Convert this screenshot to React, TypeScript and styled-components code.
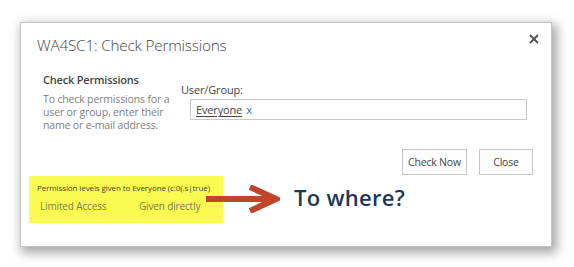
import React from "react";
import styled, { createGlobalStyle } from "styled-components";

const Global = createGlobalStyle`
  html, body { margin: 0; padding: 0; background: #fff; }
  body { font-family: "Open Sans", "Noto Sans", sans-serif; }
`;

const Page = styled.div`
  width: 574px;
  height: 267px;
  padding: 22px 0 0 20px;
  box-sizing: border-box;
  overflow: hidden;
`;

const Dialog = styled.div`
  position: relative;
  width: 532px;
  height: 225px;
  box-sizing: border-box;
  background: #fff;
  border: 1px solid #c6c6c6;
  box-shadow: 3px 4px 10px 2px rgba(0, 0, 0, 0.35);
  display: flex;
  flex-direction: column;
`;

const Title = styled.h1`
  margin: 0;
  padding: 11px 0 0 16px;
  font-family: "Open Sans", sans-serif;
  font-weight: 300;
  font-size: 15.3px;
  line-height: 22px;
  color: #444;
  letter-spacing: -0.2px;
`;

const CloseX = styled.svg`
  position: absolute;
  top: 11px;
  right: 12px;
`;

const Body = styled.div`
  display: flex;
  padding: 17px 0 0 22px;
`;

const Left = styled.div`
  width: 138px;
  display: flex;
  flex-direction: column;
`;

const SectionTitle = styled.div`
  font-size: 11px;
  line-height: 14px;
  font-weight: 600;
  color: #444;
  letter-spacing: -0.2px;
`;

const Desc = styled.div`
  margin-top: 6px;
  font-size: 10.5px;
  line-height: 13px;
  color: #808080;
  letter-spacing: -0.15px;
`;

const Right = styled.div`
  display: flex;
  flex-direction: column;
  padding-top: 10px;
`;

const Label = styled.div`
  font-size: 11px;
  line-height: 14px;
  color: #444;
  letter-spacing: -0.15px;
`;

const Input = styled.div`
  margin: 2px 0 0 9px;
  width: 337px;
  height: 21px;
  box-sizing: border-box;
  border: 1px solid #c8c8c8;
  display: flex;
  align-items: center;
  padding-left: 5px;
  font-size: 11px;
  letter-spacing: -0.15px;
`;

const Entity = styled.span`
  color: #444;
  text-decoration: underline;
  text-underline-offset: 2px;
`;

const Remove = styled.span`
  color: #2a6ebb;
  margin-left: 4px;
`;

const Buttons = styled.div`
  display: flex;
  justify-content: flex-end;
  gap: 12px;
  padding: 17px 18px 0 0;
`;

const Button = styled.button<{ $w: number }>`
  width: ${(p) => p.$w}px;
  height: 26px;
  box-sizing: border-box;
  background: #fdfdfd;
  border: 1px solid #c6c6c6;
  font-family: "Open Sans", sans-serif;
  font-size: 10.5px;
  color: #444;
  letter-spacing: -0.2px;
  padding: 0;
`;

const Footer = styled.div`
  display: flex;
  align-items: center;
  padding: 1px 0 0 8px;
`;

const Highlight = styled.div`
  width: 194px;
  height: 47px;
  box-sizing: border-box;
  background: #fbfb4f;
  padding: 6px 0 0 8px;
  display: flex;
  flex-direction: column;
`;

const Small = styled.div`
  font-size: 8px;
  line-height: 11px;
  color: #45452c;
  letter-spacing: -0.1px;
  white-space: nowrap;
`;

const Row = styled.div`
  display: flex;
  margin-top: 7px;
  padding-left: 3px;
  font-size: 10px;
  line-height: 13px;
  color: #7d7d4c;
  letter-spacing: -0.15px;
`;

const Cell = styled.span<{ $w: number }>`
  width: ${(p) => p.$w}px;
`;

const Arrow = styled.svg`
  margin-left: -17px;
  margin-top: -2px;
`;

const Where = styled.div`
  margin-left: 14px;
  margin-top: -6px;
  font-family: "Open Sans", sans-serif;
  font-size: 22px;
  font-weight: 600;
  color: #1c365c;
  letter-spacing: 0.3px;
`;

export default function App() {
  return (
    <>
      <Global />
      <Page>
        <Dialog>
          <Title>WA4SC1: Check Permissions</Title>
          <CloseX width="10" height="10" viewBox="0 0 10 10">
            <path d="M1 1L9 9M9 1L1 9" stroke="#555" strokeWidth="2" />
          </CloseX>
          <Body>
            <Left>
              <SectionTitle>Check Permissions</SectionTitle>
              <Desc>
                To check permissions for a user or group, enter their name or
                e-mail address.
              </Desc>
            </Left>
            <Right>
              <Label>User/Group:</Label>
              <Input>
                <Entity>Everyone</Entity>
                <Remove>x</Remove>
              </Input>
            </Right>
          </Body>
          <Buttons>
            <Button $w={65}>Check Now</Button>
            <Button $w={54}>Close</Button>
          </Buttons>
          <Footer>
            <Highlight>
              <Small>Permission levels given to Everyone (c:0(.s|true)</Small>
              <Row>
                <Cell $w={99}>Limited Access</Cell>
                <Cell $w={70}>Given directly</Cell>
              </Row>
            </Highlight>
            <Arrow width="74" height="28" viewBox="0 0 74 28">
              <path d="M0 14H68" stroke="#c0452b" strokeWidth="6" />
              <path
                d="M44 2L70 14L44 26"
                fill="none"
                stroke="#c0452b"
                strokeWidth="6"
                strokeLinejoin="miter"
              />
            </Arrow>
            <Where>To where?</Where>
          </Footer>
        </Dialog>
      </Page>
    </>
  );
}
